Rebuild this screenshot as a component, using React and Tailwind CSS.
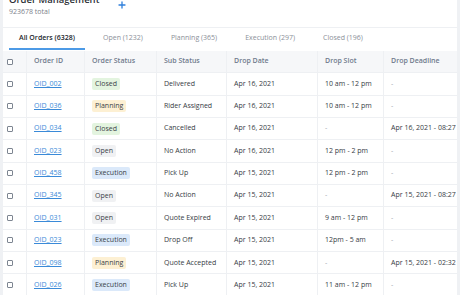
import React from "react";

const tabs = [
  { label: "All Orders (6328)", active: true },
  { label: "Open (1232)" },
  { label: "Planning (365)" },
  { label: "Execution (297)" },
  { label: "Closed (196)" },
];

const columns = ["Order ID", "Order Status", "Sub Status", "Drop Date", "Drop Slot", "Drop Deadline"];

const rows = [
  ["OID_002", "Closed", "Delivered", "Apr 16, 2021", "10 am - 12 pm", "-"],
  ["OID_036", "Planning", "Rider Assigned", "Apr 16, 2021", "10 am - 12 pm", "-"],
  ["OID_034", "Closed", "Cancelled", "Apr 16, 2021", "-", "Apr 16, 2021 - 08:27"],
  ["OID_023", "Open", "No Action", "Apr 16, 2021", "12 pm - 2 pm", "-"],
  ["OID_458", "Execution", "Pick Up", "Apr 15, 2021", "12 pm - 2 pm", "-"],
  ["OID_345", "Open", "No Action", "Apr 15, 2021", "-", "Apr 15, 2021 - 08:27"],
  ["OID_031", "Open", "Quote Expired", "Apr 15, 2021", "9 am - 12 pm", "-"],
  ["OID_023", "Execution", "Drop Off", "Apr 15, 2021", "12pm - 5 am", "-"],
  ["OID_098", "Planning", "Quote Accepted", "Apr 15, 2021", "-", "Apr 15, 2021 - 02:32"],
  ["OID_026", "Execution", "Pick Up", "Apr 15, 2021", "11 am - 12 pm", "-"],
];

// badge colours per status
const badgeStyles = {
  Closed: "bg-[#e3f4df]",
  Planning: "bg-[#fdf0d3]",
  Open: "bg-[#f0f1f3]",
  Execution: "bg-[#dbe9fa]",
};

const gridCols = "grid grid-cols-[24px_58px_72px_70px_91px_66px_73px]";

const Checkbox = () => (
  <span className="block w-[6px] h-[6px] border border-[#7d8591] rounded-[1px] bg-white"></span>
);

const Cell = ({ children, last }) => (
  <div
    className={`flex items-center px-[7px] overflow-hidden whitespace-nowrap ${
      last ? "" : "border-r border-[#eef0f3]"
    }`}
  >
    {children}
  </div>
);

const Dash = ({ value }) =>
  value === "-" ? <span className="text-[#a3a8b0]">-</span> : <span>{value}</span>;

export default function App() {
  return (
    <div
      className="w-[460px] h-[295px] overflow-hidden bg-[#eff1f4] px-[3px]"
      style={{ fontFamily: '"Open Sans", "Noto Sans", sans-serif' }}
    >
      <div className="bg-white h-full overflow-hidden">
        {/* page header */}
        <div className="h-[28px] border-b border-[#eef0f3] flex items-start pl-[6px]">
          <div className="flex flex-col">
            <h1 className="mt-[-6px] text-[9.5px] leading-[12px] font-semibold text-[#2b2f36]">
              Order Management
            </h1>
            <span className="mt-[1px] text-[7px] leading-[10px] text-[#7c828c]">923678 total</span>
          </div>
          <svg className="ml-[19px] mt-[1px]" width="8" height="8" viewBox="0 0 8 8">
            <path d="M4 1v6M1 4h6" stroke="#2f7fdb" strokeWidth="1.3" strokeLinecap="round" />
          </svg>
        </div>

        {/* tabs */}
        <div className="h-[22px] flex gap-2 pl-[6px]">
          {tabs.map((tab) => (
            <div
              key={tab.label}
              className={`px-[10px] flex items-center text-[7px] border-b-2 ${
                tab.active
                  ? "border-[#4c9ae6] text-[#22262d] font-semibold"
                  : "border-transparent text-[#8b9099]"
              }`}
            >
              {tab.label}
            </div>
          ))}
        </div>

        {/* table */}
        <div className="mt-[1px] text-[7px]">
          <div className={`${gridCols} h-[22.35px] bg-[#f6f7f9] border-b border-[#eef0f3] text-[#6f7a8c] font-semibold`}>
            <div className="flex items-center pl-[4px] border-r border-[#eef0f3]">
              <Checkbox />
            </div>
            {columns.map((c, i) => (
              <Cell key={c} last={i === columns.length - 1}>
                {c}
              </Cell>
            ))}
          </div>

          {rows.map((r, idx) => (
            <div key={idx} className={`${gridCols} h-[22.35px] border-b border-[#eef0f3] text-[#363b44]`}>
              <div className="flex items-center pl-[4px] border-r border-[#eef0f3]">
                <Checkbox />
              </div>
              <Cell>
                <a className="text-[#3a8ad8] underline">{r[0]}</a>
              </Cell>
              <Cell>
                <span className={`px-[3px] h-[12px] leading-[12px] rounded-[2px] text-[#3a3f47] ${badgeStyles[r[1]]}`}>
                  {r[1]}
                </span>
              </Cell>
              <Cell>{r[2]}</Cell>
              <Cell>{r[3]}</Cell>
              <Cell>
                <Dash value={r[4]} />
              </Cell>
              <Cell last>
                <Dash value={r[5]} />
              </Cell>
            </div>
          ))}
        </div>
      </div>
    </div>
  );
}
